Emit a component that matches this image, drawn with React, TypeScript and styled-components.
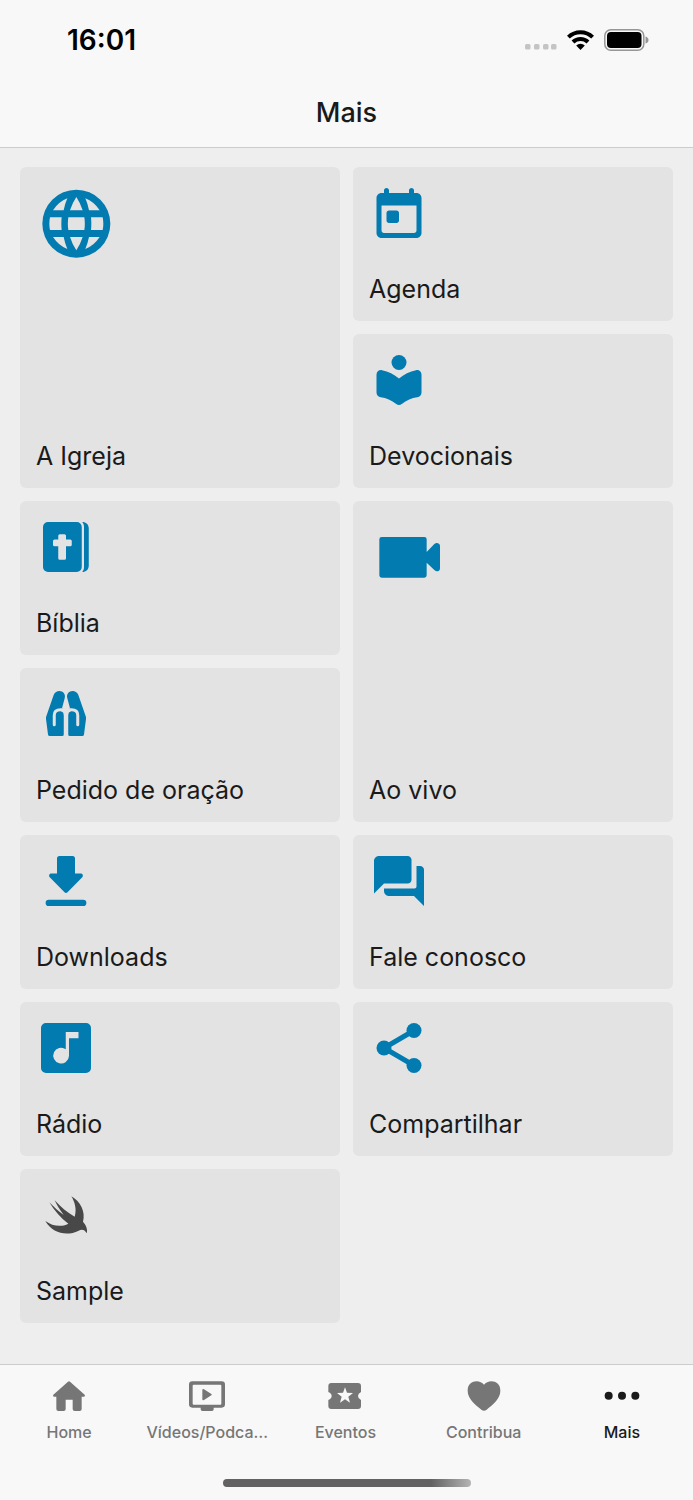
import React from "react";
import styled, { createGlobalStyle } from "styled-components";

const blue = "#027bb1";
const tileColor = "#e3e3e3";

const GlobalStyle = createGlobalStyle`
  * { box-sizing: border-box; }
  body {
    margin: 0;
    background: #eeeeee;
    color: #1a1a1a;
    font-family: Inter, "Liberation Sans", sans-serif;
  }
`;

const Page = styled.div`
  display: flex;
  flex-direction: column;
  min-height: 100vh;
`;

const Header = styled.header`
  background: #f8f8f8;
  border-bottom: 1px solid #cccccc;
`;

const StatusBar = styled.div`
  display: flex;
  align-items: center;
  justify-content: space-between;
  height: 79px;
  padding: 0 44px 0 67px;
`;

const Time = styled.time`
  font-size: 28px;
  font-weight: 600;
  line-height: 32px;
  color: #000;
`;

const StatusIcons = styled.div`
  display: flex;
  align-items: center;
  gap: 10px;
`;

const Title = styled.h1`
  margin: 0;
  font-size: 27px;
  font-weight: 500;
  line-height: 68px;
  text-align: center;
`;

const Grid = styled.main`
  flex: 1;
  display: grid;
  grid-template-columns: 1fr 1fr;
  grid-auto-rows: 154px;
  gap: 13px;
  padding: 19px 20px;
`;

const Tile = styled.a<{ $tall?: boolean }>`
  display: flex;
  flex-direction: column;
  justify-content: space-between;
  align-items: flex-start;
  grid-row: span ${(p) => (p.$tall ? 2 : 1)};
  padding: 16px;
  border-radius: 6px;
  background: ${tileColor};
  color: #1a1a1a;
  text-decoration: none;
`;

const TileIcon = styled.svg<{ $size: number; $color?: string }>`
  display: block;
  width: ${(p) => p.$size}px;
  height: ${(p) => p.$size}px;
  fill: ${(p) => p.$color ?? blue};
`;

const TileLabel = styled.span`
  font-size: 25px;
  line-height: 32px;
`;

const TabBar = styled.footer`
  display: flex;
  flex-direction: column;
  align-items: center;
  justify-content: space-between;
  height: 136px;
  padding: 15px 0 13px;
  background: #f8f8f8;
  border-top: 1px solid #cccccc;
`;

const Tabs = styled.nav`
  display: grid;
  grid-template-columns: repeat(5, minmax(0, 1fr));
  width: 100%;
  padding-right: 2px;
`;

const Tab = styled.a<{ $active?: boolean }>`
  display: flex;
  flex-direction: column;
  align-items: center;
  gap: 10px;
  color: ${(p) => (p.$active ? "#1a1a1a" : "#767676")};
  text-decoration: none;
`;

const TabIcon = styled.svg`
  display: block;
  width: 40px;
  height: 32px;
  fill: currentColor;
`;

const TabLabel = styled.span`
  font-size: 16px;
  font-weight: 500;
  line-height: 20px;
  white-space: nowrap;
`;

const HomeIndicator = styled.div`
  width: 248px;
  height: 8px;
  border-radius: 4px;
  background: linear-gradient(90deg, #626262 0%, #626262 84%, #b4b4b4 100%);
`;

type TileData = {
  label: string;
  tall?: boolean;
  viewBox?: string;
  color?: string;
  art: React.ReactNode;
};

const tiles: TileData[] = [
  {
    label: "A Igreja",
    tall: true,
    viewBox: "48 48 243 243",
    art: (
      <path
        fillRule="evenodd"
        d="M169 68a102 102 0 1 0 0 204a102 102 0 1 0 0-204z
        M169 90Q181 108 188 130H150Q157 108 169 90z
        M169 250Q157 232 150 210H188Q181 232 169 250z
        M145 151H193Q196 170 193 189H145Q142 170 145 151z
        M90 151H125Q123 170 125 189H90Q86 170 90 151z
        M213 151H248Q252 170 248 189H213Q215 170 213 151z
        M99 130Q116 104 142 94Q135 110 131 130z
        M239 130Q222 104 196 94Q203 110 207 130z
        M99 210Q116 236 142 246Q135 230 131 210z
        M239 210Q222 236 196 246Q203 230 207 210z"
      />
    ),
  },
  {
    label: "Agenda",
    art: (
      <path
        fillRule="evenodd"
        d="M19 4h-1V3c0-.55-.45-1-1-1s-1 .45-1 1v1H8V3c0-.55-.45-1-1-1S6 2.450 6 3v1H5c-1.100 0-2 .9-2 2v14c0 1.100.9 2 2 2h14c1.100 0 2-.9 2-2V6c0-1.100-.9-2-2-2zM19 19c0 .55-.45 1-1 1H6c-.55 0-1-.45-1-1V9h14v10zM8 11h3c.55 0 1 .45 1 1v3c0 .55-.45 1-1 1H8c-.55 0-1-.45-1-1v-3c0-.55.45-1 1-1z"
      />
    ),
  },
  {
    label: "Devocionais",
    art: (
      <>
        <circle cx="12" cy="5" r="3" />
        <path d="M12 11.400C10.100 9.700 7.700 8.500 5.200 8.050C4 7.850 3 8.700 3 9.900V17c0 1 .7 1.800 1.700 1.900c2.200.3 4.300 1.200 6.200 2.700c.65.500 1.550.500 2.200 0c1.900-1.500 4-2.400 6.200-2.700c1-.1 1.700-.9 1.700-1.900V9.900c0-1.200-1-2.050-2.200-1.850C16.300 8.500 13.900 9.700 12 11.400z" />
      </>
    ),
  },
  {
    label: "Bíblia",
    art: (
      <>
        <path
          fillRule="evenodd"
          d="M4.800 2H16.300a2 2 0 0 1 2 2V20a2 2 0 0 1-2 2H4.800a2 2 0 0 1-2-2V4a2 2 0 0 1 2-2z
          M9.500 6.900a.6.6 0 0 0-.6.6V9H7.400a.6.6 0 0 0-.6.6v1.500a.6.6 0 0 0 .6.600H8.900v4.800a.6.6 0 0 0 .6.600h1.900a.6.6 0 0 0 .6-.6V11.700h1.700a.6.6 0 0 0 .6-.6V9.600a.6.6 0 0 0-.6-.6H12V7.500a.6.6 0 0 0-.6-.6z"
        />
        <path d="M18.500 2C20 2 21.100 3 21.100 4.500v15c0 1.500-1.100 2.500-2.600 2.500C19 21.400 19.200 20.800 19.200 20V4C19.200 3.200 19 2.600 18.500 2z" />
      </>
    ),
  },
  {
    label: "Ao vivo",
    tall: true,
    viewBox: "57 51 243 243",
    art: (
      <path d="M95 111H223a7 7 0 0 1 7 7V156L253 132Q260 126 267 131Q270 133 270 138V205Q270 210 267 212Q260 217 253 210L230 188V226a7 7 0 0 1-7 7H95a7 7 0 0 1-7-7V118a7 7 0 0 1 7-7z" />
    ),
  },
  {
    label: "Pedido de oração",
    art: (
      <>
        {[undefined, "matrix(-1 0 0 1 24 0)"].map((transform, i) => (
          <g key={i} transform={transform}>
            <path d="M7.100 4.300C7.600 3.300 8.400 2.800 9.300 2.800c1.600 0 2.600 1.300 2.200 2.800L10.400 9.700L11.100 10V20.200a.6.6 0 0 1-.6.600H5.500a.7.7 0 0 1-.7-.6L4 14c-.05-.4 0-.8.150-1.200z" />
            <path
              d="M7.300 16.300V12.500Q7.300 10.300 9.800 10.300H12"
              fill="none"
              stroke={tileColor}
              strokeWidth="1.200"
              strokeLinecap="round"
            />
            <path d="M10.600 10.600H12V12.300H11.100Q11.100 11.200 10 11z" fill={tileColor} />
          </g>
        ))}
      </>
    ),
  },
  {
    label: "Downloads",
    art: (
      <path d="M9.400 2h5.200a1 1 0 0 1 1 1v6h2.300c.8 0 1.100.9.600 1.500l-5.900 6a.9.9 0 0 1-1.200 0l-5.900-6C5 9.900 5.300 9 6.100 9H8.400V3a1 1 0 0 1 1-1zM5.100 19.500h13.800a1.200 1.200 0 0 1 0 2.500H5.100a1.200 1.200 0 0 1 0-2.500z" />
    ),
  },
  {
    label: "Fale conosco",
    art: (
      <path d="M17 11.500V3.500C17 2.700 16.300 2 15.500 2H4c-1.100 0-2 .9-2 2v13l4-4h9.500c.8 0 1.500-.7 1.500-1.500zM20.500 6H19v8.200c0 .45-.35.8-.8.800H6v1c0 1.100.9 2 2 2h10l4 4V7.500c0-.8-.7-1.500-1.500-1.500z" />
    ),
  },
  {
    label: "Rádio",
    art: (
      <path
        fillRule="evenodd"
        d="M4 2h16a2 2 0 0 1 2 2v16a2 2 0 0 1-2 2H4a2 2 0 0 1-2-2V4a2 2 0 0 1 2-2zM11.900 5.600V12.500A3.150 3.150 0 1 0 13.200 15.200V8.100H17V5.600z"
      />
    ),
  },
  {
    label: "Compartilhar",
    art: (
      <>
        <path d="M18 5L6 12l12 7" fill="none" stroke={blue} strokeWidth="2" />
        <circle cx="18" cy="5" r="3" />
        <circle cx="6" cy="12" r="3" />
        <circle cx="18" cy="19" r="3" />
      </>
    ),
  },
  {
    label: "Sample",
    viewBox: "48 58 180 180",
    color: "#484848",
    art: (
      <path d="M154 92C182 108 197 139 189 168C201 182 203 194 200 203C194 191 185 190 176 195C140 213 98 203 76 166C98 182 124 185 145 174C121 156 103 135 88 110C102 125 117 138 131 148C120 134 111 119 104 104C122 124 142 141 164 153C171 131 164 108 154 92z" />
    ),
  },
];

const tabs = [
  {
    label: "Home",
    viewBox: "148 75 120 96",
    art: (
      <path d="M205 80Q208 78 211 80L255 119Q258 123 253 125H246V162Q246 168 240 168H225Q219 168 219 162V134H198V162Q198 168 192 168H176Q170 168 170 162V125H163Q158 123 161 119z" />
    ),
  },
  {
    label: "Vídeos/Podca…",
    viewBox: "562 75 120 96",
    art: (
      <path
        fillRule="evenodd"
        d="M578 79H666a10 10 0 0 1 10 10V148a10 10 0 0 1-10 10H642V163Q642 168 637 168H608Q603 168 603 163V158H578a10 10 0 0 1-10-10V89a10 10 0 0 1 10-10zM582 89a3 3 0 0 0-3 3V146a3 3 0 0 0 3 3H662a3 3 0 0 0 3-3V92a3 3 0 0 0-3-3zM608 106Q608 100 613 103L635 117Q638 119 635 121L613 135Q608 138 608 132z"
      />
    ),
  },
  {
    label: "Eventos",
    viewBox: "980 75 120 96",
    art: (
      <path
        fillRule="evenodd"
        d="M999 84H1079Q1088 84 1088 93V111Q1079 115 1079 123Q1079 131 1088 135V153Q1088 162 1079 162H999Q990 162 990 153V135Q1000 131 1000 123Q1000 115 990 111V93Q990 84 999 84z
        M1040 97L1046 113L1064 114L1050 125L1055 143L1040 133L1025 143L1030 125L1016 114L1034 113z"
      />
    ),
  },
  {
    label: "Contribua",
    viewBox: "363 75 120 96",
    art: (
      <path d="M423 89C435 73 472 74 472 107C472 131 451 147 430 165Q423 170 416 165C395 147 374 131 374 107C374 74 411 73 423 89z" />
    ),
  },
  {
    label: "Mais",
    active: true,
    viewBox: "778 75 120 96",
    art: (
      <>
        <circle cx="798" cy="122" r="12" />
        <circle cx="838" cy="122" r="12" />
        <circle cx="878" cy="122" r="12" />
      </>
    ),
  },
];

function SignalIcon() {
  return (
    <svg width="32" height="20" viewBox="0 0 32 20" fill="#c4c4c4" aria-hidden="true">
      {[0, 9, 18, 26].map((x) => (
        <rect key={x} x={x} y="14" width="5.500" height="5.500" rx="1.500" />
      ))}
    </svg>
  );
}

function WifiIcon() {
  return (
    <svg width="27" height="20" viewBox="0 0 27 20" aria-hidden="true">
      <g fill="none" stroke="#000" strokeWidth="4">
        <path d="M1.400 7.200a17.200 17.200 0 0 1 24.200 0" />
        <path d="M6 12a10.700 10.700 0 0 1 15 0" />
      </g>
      <path d="M13.500 20L9.200 15.600a6.200 6.200 0 0 1 8.600 0z" />
    </svg>
  );
}

function BatteryIcon() {
  return (
    <svg width="45" height="22" viewBox="0 0 45 22" aria-hidden="true">
      <rect x="0.800" y="0.800" width="39" height="20.400" rx="6" fill="none" stroke="#969696" strokeWidth="1.500" />
      <rect x="3" y="3" width="34.500" height="16" rx="4" />
      <path d="M41.500 7.500q3 1 3 3.500t-3 3.500z" fill="#969696" />
    </svg>
  );
}

export default function App() {
  return (
    <Page>
      <GlobalStyle />
      <Header>
        <StatusBar>
          <Time>16:01</Time>
          <StatusIcons>
            <SignalIcon />
            <WifiIcon />
            <BatteryIcon />
          </StatusIcons>
        </StatusBar>
        <Title>Mais</Title>
      </Header>
      <Grid>
        {tiles.map((tile) => (
          <Tile key={tile.label} href="#" $tall={tile.tall}>
            <TileIcon
              viewBox={tile.viewBox ?? "0 0 24 24"}
              $size={tile.tall ? 81 : 60}
              $color={tile.color}
              aria-hidden="true"
            >
              {tile.art}
            </TileIcon>
            <TileLabel>{tile.label}</TileLabel>
          </Tile>
        ))}
      </Grid>
      <TabBar>
        <Tabs>
          {tabs.map((tab) => (
            <Tab key={tab.label} href="#" $active={tab.active} aria-current={tab.active ? "page" : undefined}>
              <TabIcon viewBox={tab.viewBox} aria-hidden="true">
                {tab.art}
              </TabIcon>
              <TabLabel>{tab.label}</TabLabel>
            </Tab>
          ))}
        </Tabs>
        <HomeIndicator />
      </TabBar>
    </Page>
  );
}
